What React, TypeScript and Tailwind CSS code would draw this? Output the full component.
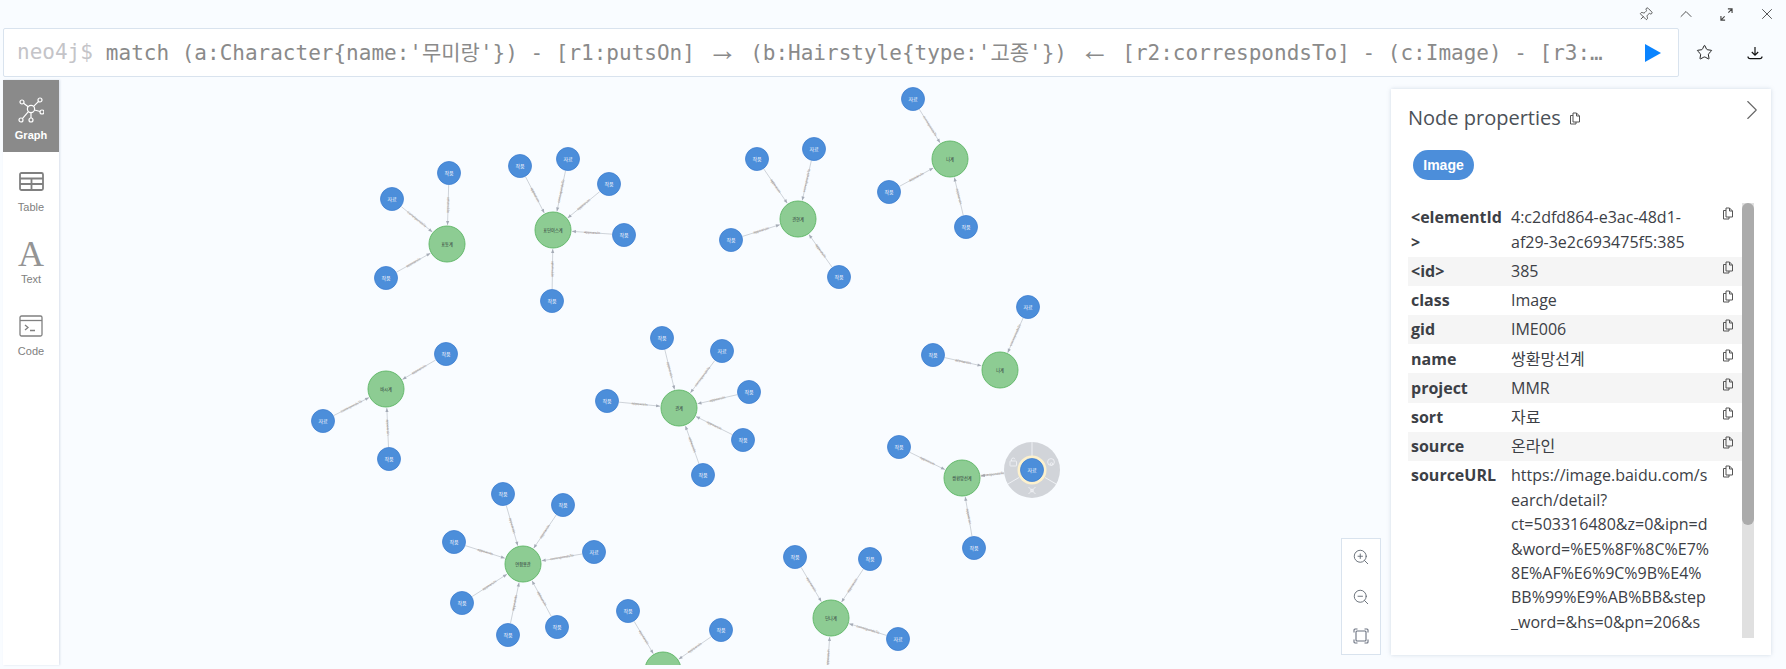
import React from 'react';
import { ChevronRight, ChevronUp, Pin, Star, X, ZoomIn, ZoomOut } from 'lucide-react';

type Leaf = { x: number; y: number; label?: string; rel?: string };
type Cluster = { x: number; y: number; name: string; leaves: Leaf[] };

const CLUSTERS: Cluster[] = [
  { x: 447, y: 244, name: '표동계', leaves: [{ x: 449, y: 173 }, { x: 392, y: 199, label: '자료' }, { x: 386, y: 278 }] },
  { x: 553, y: 230, name: '표단이스계', leaves: [{ x: 520, y: 166 }, { x: 568, y: 159, label: '자료' }, { x: 609, y: 184 }, { x: 624, y: 235 }, { x: 552, y: 301 }] },
  { x: 798, y: 219, name: '관현계', leaves: [{ x: 757, y: 159 }, { x: 814, y: 149, label: '자료' }, { x: 731, y: 240 }, { x: 839, y: 277 }] },
  { x: 950, y: 159, name: '나계', leaves: [{ x: 913, y: 99, label: '자료' }, { x: 889, y: 192 }, { x: 966, y: 227 }] },
  { x: 1000, y: 370, name: '나계', leaves: [{ x: 1028, y: 307, label: '자료' }, { x: 933, y: 355 }] },
  { x: 386, y: 389, name: '바시계', leaves: [{ x: 446, y: 354 }, { x: 323, y: 421, label: '자료' }, { x: 389, y: 459 }] },
  { x: 679, y: 408, name: '관계', leaves: [{ x: 662, y: 338 }, { x: 722, y: 351, label: '자료' }, { x: 749, y: 392 }, { x: 743, y: 440 }, { x: 703, y: 475 }, { x: 607, y: 401 }] },
  { x: 962, y: 478, name: '쌍환망선계', leaves: [{ x: 899, y: 447 }, { x: 974, y: 548 }] },
  { x: 523, y: 564, name: '연합용관', leaves: [{ x: 503, y: 494 }, { x: 563, y: 505 }, { x: 454, y: 542 }, { x: 594, y: 552, label: '자료' }, { x: 462, y: 603 }, { x: 508, y: 635 }, { x: 557, y: 627 }] },
  { x: 663, y: 670, name: '나계', leaves: [{ x: 628, y: 611 }, { x: 721, y: 630 }] },
  { x: 831, y: 618, name: '단나계', leaves: [{ x: 795, y: 557 }, { x: 870, y: 559 }, { x: 898, y: 639, label: '자료' }, { x: 826, y: 690 }] },
];

const SELECTED = { x: 1032, y: 470 };

// line breaks in the url follow the panel's wrapping
const PROPS: { key: string; value: string }[] = [
  { key: '<elementId>', value: '4:c2dfd864-e3ac-48d1-af29-3e2c693475f5:385' },
  { key: '<id>', value: '385' },
  { key: 'class', value: 'Image' },
  { key: 'gid', value: 'IME006' },
  { key: 'name', value: '쌍환망선계' },
  { key: 'project', value: 'MMR' },
  { key: 'sort', value: '자료' },
  { key: 'source', value: '온라인' },
  {
    key: 'sourceURL',
    value:
      'https://image.baidu.com/s\nearch/detail?\nct=503316480&z=0&ipn=d\n&word=%E5%8F%8C%E7%\n8E%AF%E6%9C%9B%E4%\nBB%99%E9%AB%BB&step\n_word=&hs=0&pn=206&s\npn=0&di=7&pi=0&rn=1',
  },
];

function CopyIcon({ className = '' }: { className?: string }) {
  return (
    <svg viewBox="0 0 12 13" className={className} fill="none" stroke="currentColor" strokeWidth="1">
      <path d="M4 1h3.5L10.5 4v6H4z" strokeLinejoin="round" />
      <path d="M7.5 1v3h3" />
      <path d="M4 3.5H1.5V12H7v-2" strokeLinejoin="round" />
    </svg>
  );
}

function GraphIcon() {
  return (
    <svg viewBox="0 0 26 26" className="h-[26px] w-[26px]" fill="none" stroke="white" strokeWidth="1.2">
      <circle cx="13" cy="12" r="3.6" />
      <circle cx="4" cy="5" r="2" />
      <circle cx="22" cy="3" r="2" />
      <circle cx="24" cy="15" r="2" />
      <circle cx="13" cy="23" r="2" />
      <circle cx="3" cy="23" r="2" />
      <path d="M5.6 6.2l4.6 3.6M20.6 4.4l-5 5M16.5 13l5.6 1.5M13 15.6V21M10.4 14.6L4.4 21.6" />
    </svg>
  );
}

function TableIcon() {
  return (
    <svg viewBox="0 0 25 19" className="h-[19px] w-[25px]" fill="none" stroke="#808080" strokeWidth="1.8">
      <rect x="1" y="1" width="23" height="17" rx="1.5" />
      <path d="M1 6.5h23M1 12h23M12.5 6.5V18" />
    </svg>
  );
}

function CodeIcon() {
  return (
    <svg viewBox="0 0 24 22" className="h-[22px] w-6" fill="none" stroke="#808080" strokeWidth="1.3">
      <rect x="1" y="1" width="22" height="20" rx="1.5" />
      <path d="M1 5.5h22" />
      <path d="M6 10l3 2.5L6 15M11 15.5h5" />
    </svg>
  );
}

function DownloadIcon() {
  return (
    <svg viewBox="0 0 16 14" className="h-3.5 w-4" fill="none" stroke="#111" strokeWidth="1.2">
      <path d="M8 1v8M4.8 6L8 9.2 11.2 6" />
      <path d="M1 10.5c0 1.5 1 2.2 2.2 2.2h9.6c1.2 0 2.2-.7 2.2-2.2" />
    </svg>
  );
}

function ExpandIcon() {
  return (
    <svg viewBox="0 0 14 14" className="h-[13px] w-[13px]" fill="none" stroke="#444" strokeWidth="1.2">
      <path d="M8.5 1H13v4.5M13 1L9 5M5.5 13H1V8.5M1 13l4-4" />
    </svg>
  );
}

function FitIcon() {
  return (
    <svg viewBox="0 0 16 16" className="h-4 w-4" fill="none" stroke="#6b7280" strokeWidth="1.1">
      <rect x="3" y="3" width="10" height="10" rx="1" />
      <path d="M1 4.5V2a1 1 0 0 1 1-1h2.5M11.5 1H14a1 1 0 0 1 1 1v2.5M15 11.5V14a1 1 0 0 1-1 1h-2.5M4.5 15H2a1 1 0 0 1-1-1v-2.5" />
    </svg>
  );
}

// relationship line running from a leaf node to its hub, with the tiny type label on it
function Edge({ from, to, label, r1 = 12, r2 = 19 }: { from: { x: number; y: number }; to: { x: number; y: number }; label: string; r1?: number; r2?: number }) {
  const dx = to.x - from.x;
  const dy = to.y - from.y;
  const len = Math.hypot(dx, dy);
  const ux = dx / len;
  const uy = dy / len;
  const sx = from.x + ux * r1;
  const sy = from.y + uy * r1;
  const ex = to.x - ux * r2;
  const ey = to.y - uy * r2;
  const mx = (sx + ex) / 2;
  const my = (sy + ey) / 2;
  let angle = (Math.atan2(dy, dx) * 180) / Math.PI;
  if (angle > 90 || angle < -90) angle += 180;
  const head = `${ex},${ey} ${ex - ux * 4 - uy * 1.6},${ey - uy * 4 + ux * 1.6} ${ex - ux * 4 + uy * 1.6},${ey - uy * 4 - ux * 1.6}`;
  return (
    <g>
      <line x1={sx} y1={sy} x2={ex} y2={ey} stroke="#bcc1c9" strokeWidth="0.7" />
      <polygon points={head} fill="#a5abb6" />
      <text
        x={mx}
        y={my}
        transform={`rotate(${angle} ${mx} ${my})`}
        textAnchor="middle"
        dominantBaseline="middle"
        fontSize="3.6"
        fontFamily="'Liberation Sans', sans-serif"
        fill="#9a8f88"
      >
        {label}
      </text>
    </g>
  );
}

function BlueNode({ x, y, label = '작품' }: Leaf) {
  return (
    <g>
      <circle cx={x} cy={y} r="11.5" fill="#4c8eda" stroke="#3f7fd0" strokeWidth="0.8" />
      <text x={x} y={y + 0.5} textAnchor="middle" dominantBaseline="middle" fontSize="5" fontFamily="'Noto Sans CJK KR', sans-serif" fill="#ffffff">
        {label}
      </text>
    </g>
  );
}

function GreenNode({ x, y, name }: { x: number; y: number; name: string }) {
  return (
    <g>
      <circle cx={x} cy={y} r="18" fill="#8dcc93" stroke="#5db665" strokeWidth="0.9" />
      <text x={x} y={y + 0.5} textAnchor="middle" dominantBaseline="middle" fontSize="4.2" fontFamily="'Noto Sans CJK KR', sans-serif" fill="#2a2c34">
        {name}
      </text>
    </g>
  );
}

// the grey radial menu neo4j shows around the selected node
function SelectedNode({ x, y }: { x: number; y: number }) {
  return (
    <g>
      <circle cx={x} cy={y} r="28" fill="#d1d4d9" />
      <g stroke="#f2f4f7" strokeWidth="0.9">
        <line x1={x} y1={y - 28} x2={x} y2={y - 14} />
        <line x1={x + 13} y1={y + 7.5} x2={x + 24.2} y2={y + 14} />
        <line x1={x - 13} y1={y + 7.5} x2={x - 24.2} y2={y + 14} />
      </g>
      <g fill="none" stroke="#f2f4f7" strokeWidth="0.8">
        <rect x={x - 22} y={y - 9} width="6.5" height="5" rx="0.6" />
        <path d={`M${x - 20.5} ${y - 9}v-1.6a1.8 1.8 0 0 1 3.5 0`} />
        <circle cx={x + 19} cy={y - 8} r="3.4" />
        <circle cx={x + 19.5} cy={y - 6} r="1.3" />
        <path d={`M${x - 3.5} ${y + 17}l7 7M${x + 3.5} ${y + 17}l-7 7`} />
        <circle cx={x} cy={y + 20.5} r="1.4" />
      </g>
      <circle cx={x} cy={y} r="14.5" fill="#fdf1cd" />
      <BlueNode x={x} y={y} label="자료" />
    </g>
  );
}

function GraphCanvas() {
  return (
    <svg viewBox="59 80 1727 585" className="h-full w-full">
      {CLUSTERS.map(c => (
        <g key={`${c.x}-${c.y}-edges`}>
          {c.leaves.map(l => (
            <Edge key={`${l.x}-${l.y}`} from={l} to={c} label={l.label ? 'correspondsTo' : 'appearsIn'} />
          ))}
        </g>
      ))}
      <Edge from={SELECTED} to={{ x: 962, y: 478 }} r1={28} label="correspondsTo" />
      {CLUSTERS.map(c => (
        <g key={`${c.x}-${c.y}-nodes`}>
          <GreenNode x={c.x} y={c.y} name={c.name} />
          {c.leaves.map(l => (
            <BlueNode key={`${l.x}-${l.y}`} {...l} />
          ))}
        </g>
      ))}
      <SelectedNode {...SELECTED} />
    </svg>
  );
}

function SideTab({ icon, label, active = false }: { icon: React.ReactNode; label: string; active?: boolean }) {
  return (
    <div className={`flex h-[72px] flex-col items-center justify-center gap-[3px] pt-[4px] ${active ? 'bg-[#8a8a8a]' : ''}`}>
      <div className="flex h-[30px] items-center justify-center">{icon}</div>
      <span className={`text-[11px] leading-[14px] font-['Liberation_Sans',sans-serif] ${active ? 'font-bold text-white' : 'text-[#808080]'}`}>{label}</span>
    </div>
  );
}

function QueryArrow({ glyph }: { glyph: string }) {
  return <span className="inline-block w-[30px] text-center font-['Liberation_Sans',sans-serif] text-[30px] leading-none">{glyph}</span>;
}

function PropertiesPanel() {
  return (
    <div className="absolute top-[9px] left-[1332px] flex h-[566px] w-[380px] flex-col bg-white pl-[17px] font-['Open_Sans','Noto_Sans_CJK_KR',sans-serif] shadow-[0_0_4px_rgba(120,140,170,0.3)]">
      <div className="flex items-center gap-2 pt-[15px] pr-[2px] leading-[28px]">
        <span className="text-[20px] text-[#4b5158]">Node properties</span>
        <CopyIcon className="h-[13px] w-3 text-[#555]" />
        <ChevronRight className="-my-[6px] mt-[-22px] ml-auto h-[34px] w-[34px] text-[#666]" strokeWidth={0.75} />
      </div>
      <div className="mt-[18px] ml-[5px] flex h-[30px] w-[61px] items-center justify-center rounded-full bg-[#4c8eda] font-['Liberation_Sans',sans-serif] text-[14px] font-bold text-white">
        Image
      </div>
      <div className="mt-[23px] flex h-[435px] w-[346px] overflow-hidden">
        <div className="w-[334px] shrink-0">
          {PROPS.map((p, i) => (
            <div key={p.key} className={`flex py-[2.4px] text-[16px] leading-[24.4px] text-[#3c4046] ${i % 2 === 1 ? 'bg-[#f5f5f5]' : ''}`}>
              <div className="w-[103px] shrink-0 pl-[3px] font-bold [overflow-wrap:anywhere]">{p.key}</div>
              <div className="w-[205px] shrink-0 whitespace-pre-line">{p.value}</div>
              <CopyIcon className="mt-[2px] ml-[6px] h-[13px] w-3 shrink-0 text-[#555]" />
            </div>
          ))}
        </div>
        <div className="h-full w-3 shrink-0 bg-[#e0e0e0]">
          <div className="h-[322px] rounded-full bg-[#ababab]" />
        </div>
      </div>
    </div>
  );
}

export default function App() {
  return (
    <div className="flex h-[669px] w-[1786px] flex-col overflow-hidden bg-[#f9fcff]">
      <div className="flex h-7 items-center justify-end gap-[20.5px] pr-[9px] text-[#444]">
        <div className="flex h-5 w-5 items-center justify-center"><Pin className="h-[15px] w-[15px] rotate-45" strokeWidth={1.3} /></div>
        <div className="flex h-5 w-5 items-center justify-center"><ChevronUp className="h-5 w-5" strokeWidth={1.1} /></div>
        <div className="flex h-5 w-5 items-center justify-center"><ExpandIcon /></div>
        <div className="flex h-5 w-5 items-center justify-center"><X className="h-[18px] w-[18px]" strokeWidth={1.2} /></div>
      </div>

      <div className="flex h-[49px] shrink-0 items-center pl-[3px]">
        <div className="flex h-full w-[1676px] items-center rounded-[2px] border border-[#d9e3ee] bg-white pr-[17px] pl-[13px] font-['DejaVu_Sans_Mono','Noto_Sans_CJK_KR',monospace] text-[21px] text-[#8a8a8a]">
          <span className="mr-[13px] shrink-0 text-[#c4c4c8]">neo4j$</span>
          <span className="min-w-0 flex-1 truncate">
            match (a:Character{'{'}name:'무미랑'{'}'}) - [r1:putsOn] <QueryArrow glyph="→" /> (b:Hairstyle{'{'}type:'고종'{'}'}) <QueryArrow glyph="←" /> [r2:correspondsTo] - (c:Image) - [r3:belongsTo] → (d:Project)
          </span>
          <svg viewBox="0 0 16 18" className="ml-[38px] h-[18px] w-4 shrink-0">
            <path d="M0 0l16 9L0 18z" fill="#0a84ff" />
          </svg>
        </div>
        <Star className="ml-[17px] h-[17px] w-[17px] text-[#111]" strokeWidth={1.3} />
        <div className="ml-[34px]">
          <DownloadIcon />
        </div>
      </div>

      <div className="mt-[3px] flex h-[585px] shrink-0">
        <div className="ml-[3px] w-[56px] shrink-0 bg-white shadow-[1px_0_2px_rgba(120,140,170,0.25)]">
          <SideTab icon={<GraphIcon />} label="Graph" active />
          <SideTab icon={<TableIcon />} label="Table" />
          <SideTab icon={<span className="font-['Liberation_Serif',serif] text-[36px] leading-none text-[#949494]">A</span>} label="Text" />
          <SideTab icon={<CodeIcon />} label="Code" />
        </div>
        <div className="relative min-w-0 flex-1">
          <GraphCanvas />
          <div className="absolute top-[458px] left-[1282px] flex h-[117px] w-[40px] flex-col items-center gap-[22px] border border-[#d9e3ee] bg-white pt-[9px] text-[#5f6670]">
            <ZoomIn className="h-[18px] w-[18px]" strokeWidth={1.2} />
            <ZoomOut className="h-[18px] w-[18px]" strokeWidth={1.2} />
            <FitIcon />
          </div>
          <PropertiesPanel />
        </div>
      </div>
    </div>
  );
}
